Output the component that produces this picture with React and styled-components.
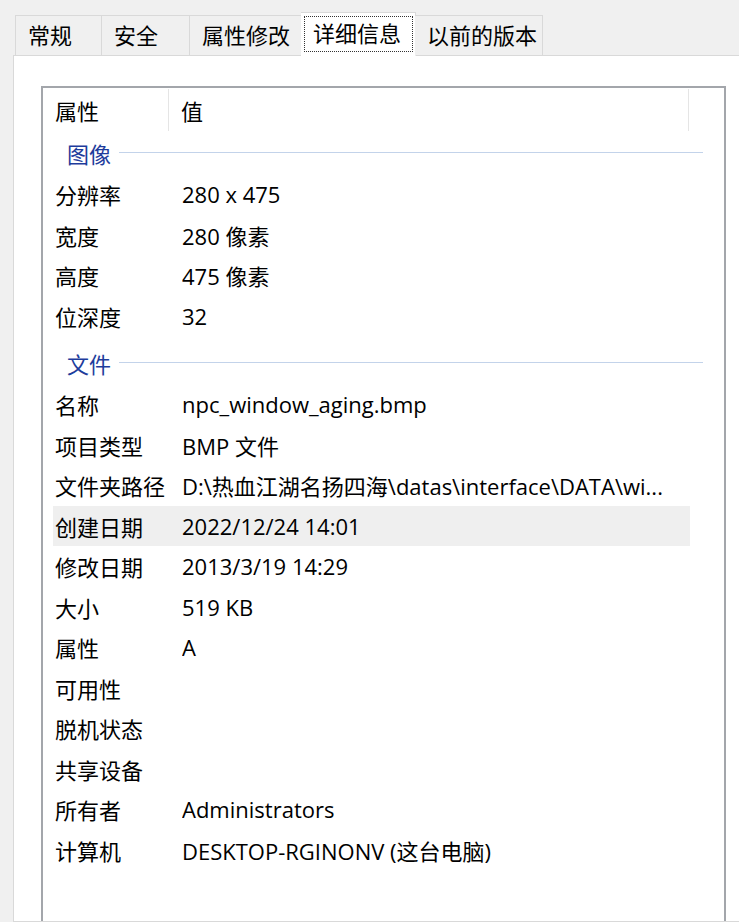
import styled, { createGlobalStyle } from "styled-components";

const GlobalStyle = createGlobalStyle`
  html, body {
    margin: 0;
    padding: 0;
    background: #f0f0f0;
  }
  body {
    font-family: "Open Sans", "Noto Sans CJK SC", sans-serif;
    font-size: 22px;
    color: #000;
  }
`;

const Page = styled.div`
  width: 739px;
  height: 922px;
  overflow: hidden;
  background: #f0f0f0;
  display: flex;
  flex-direction: column;
`;

const TabStrip = styled.div`
  display: flex;
  align-items: flex-end;
  padding: 12px 0 0 15px;
  height: 55px;
  box-sizing: border-box;
  position: relative;
  z-index: 1;
`;

const Tab = styled.div`
  width: ${(p) => p.$w}px;
  height: ${(p) => (p.$active ? 44 : 40)}px;
  box-sizing: border-box;
  display: flex;
  align-items: center;
  padding: 0 0 ${(p) => (p.$active ? 5 : 3)}px 12px;
  background: ${(p) => (p.$active ? "#fff" : "#f0f0f0")};
  border: 1px solid #d9d9d9;
  border-bottom: ${(p) => (p.$active ? "1px solid #fff" : "none")};
  margin: ${(p) => (p.$active ? "0 -1px -1px -2px" : "0")};
  & + & {
    border-left: ${(p) => (p.$active ? "1px solid #d9d9d9" : "none")};
  }
  white-space: nowrap;
  position: relative;
`;

const FocusRing = styled.span`
  position: absolute;
  left: 3px;
  right: 2px;
  top: 3px;
  bottom: 3px;
  border: 1px dotted #333;
  pointer-events: none;
`;

const Panel = styled.div`
  flex: 1;
  margin-left: 13px;
  background: #fff;
  border: 1px solid #d9d9d9;
  border-right: none;
  padding: 30px 0 0 27px;
  display: flex;
`;

const ListBox = styled.div`
  width: 685px;
  box-sizing: border-box;
  border: 2px solid #a3a6ab;
  border-bottom: none;
  padding-left: 10px;
  background: #fff;
`;

const HeaderRow = styled.div`
  display: flex;
  height: 43px;
`;

const HeaderCell = styled.div`
  width: ${(p) => p.$w}px;
  box-sizing: border-box;
  padding-left: ${(p) => p.$pad}px;
  display: flex;
  align-items: center;
  border-right: 1px solid #e5e5e5;
  margin: 1px 0 0;
`;

const GroupRow = styled.div`
  display: flex;
  align-items: center;
  width: 650px;
  height: 43px;
  margin-top: ${(p) => p.$gap || 0}px;
  padding-left: 14px;
  box-sizing: border-box;
  color: #1e3c9c;
`;

const GroupLine = styled.div`
  flex: 1;
  height: 1px;
  background: #c3d3ea;
  margin-left: 8px;
`;

const Row = styled.div`
  display: grid;
  grid-template-columns: 127px 1fr;
  align-items: center;
  width: 637px;
  height: 40.5px;
  padding-left: 2px;
  box-sizing: border-box;
  background: ${(p) => (p.$selected ? "#efefef" : "transparent")};
  white-space: nowrap;
`;

const Value = styled.span`
  overflow: hidden;
  white-space: nowrap;
`;

const tabs = [
  { label: "常规", w: 87 },
  { label: "安全", w: 88 },
  { label: "属性修改", w: 113 },
  { label: "详细信息", w: 115, active: true },
  { label: "以前的版本", w: 128 },
];

const groups = [
  {
    name: "图像",
    rows: [
      ["分辨率", "280 x 475"],
      ["宽度", "280 像素"],
      ["高度", "475 像素"],
      ["位深度", "32"],
    ],
  },
  {
    name: "文件",
    gap: 5,
    rows: [
      ["名称", "npc_window_aging.bmp"],
      ["项目类型", "BMP 文件"],
      ["文件夹路径", "D:\\热血江湖名扬四海\\datas\\interface\\DATA\\wi..."],
      ["创建日期", "2022/12/24 14:01", true],
      ["修改日期", "2013/3/19 14:29"],
      ["大小", "519 KB"],
      ["属性", "A"],
      ["可用性", ""],
      ["脱机状态", ""],
      ["共享设备", ""],
      ["所有者", "Administrators"],
      ["计算机", "DESKTOP-RGINONV (这台电脑)"],
    ],
  },
];

export default function App() {
  return (
    <Page>
      <GlobalStyle />
      <TabStrip>
        {tabs.map((t) => (
          <Tab key={t.label} $w={t.w} $active={t.active}>
            {t.label}
            {t.active && <FocusRing />}
          </Tab>
        ))}
      </TabStrip>
      <Panel>
        <ListBox>
          <HeaderRow>
            <HeaderCell $w={116} $pad={2}>属性</HeaderCell>
            <HeaderCell $w={520} $pad={12}>值</HeaderCell>
          </HeaderRow>
          {groups.map((g) => (
            <div key={g.name}>
              <GroupRow $gap={g.gap}>
                {g.name}
                <GroupLine />
              </GroupRow>
              {g.rows.map(([label, value, selected]) => (
                <Row key={label} $selected={selected}>
                  <span>{label}</span>
                  <Value>{value}</Value>
                </Row>
              ))}
            </div>
          ))}
        </ListBox>
      </Panel>
    </Page>
  );
}
